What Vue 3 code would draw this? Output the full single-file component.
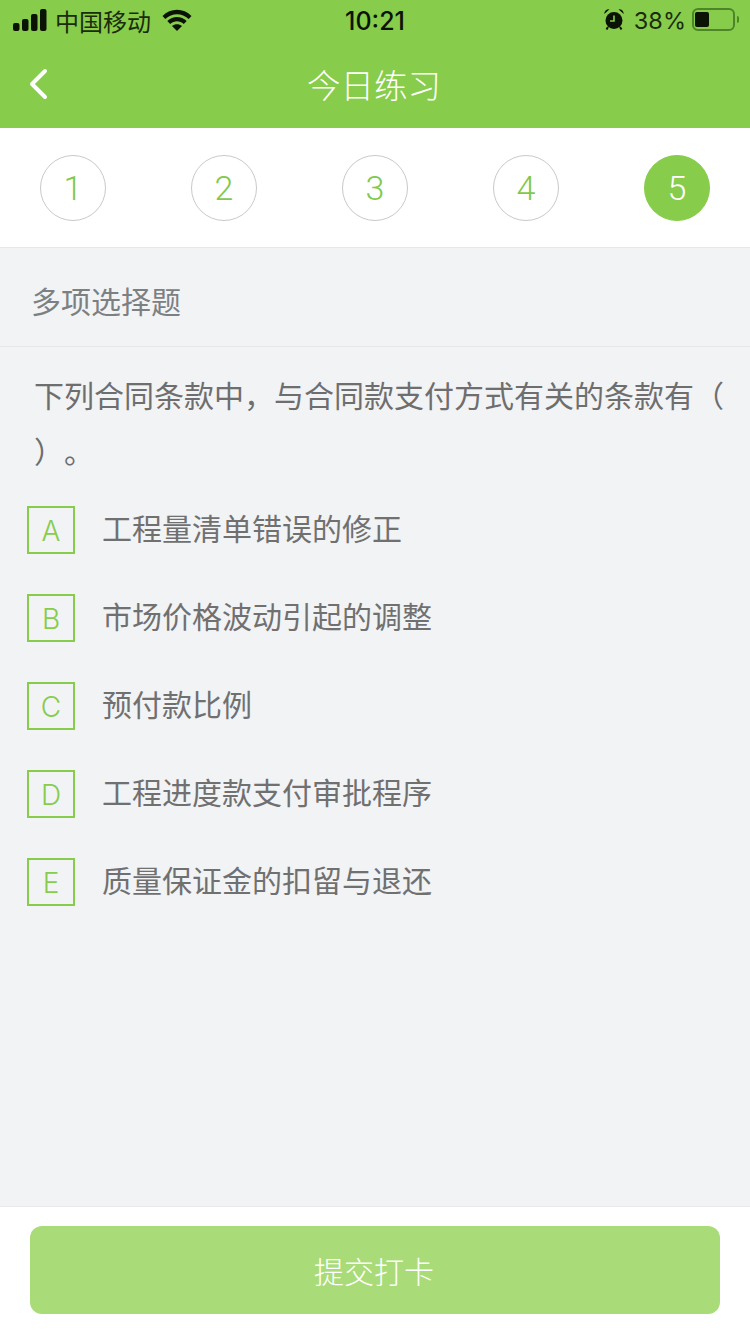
<script setup>
const steps = [1, 2, 3, 4, 5]
const options = [
  ['A', '工程量清单错误的修正'],
  ['B', '市场价格波动引起的调整'],
  ['C', '预付款比例'],
  ['D', '工程进度款支付审批程序'],
  ['E', '质量保证金的扣留与退还'],
]
</script>

<template>
  <div class="page">
    <header class="head">
      <div class="status">
        <div class="st-left">
          <svg class="signal" width="34" height="22" viewBox="0 0 34 22">
            <rect x="0" y="14" width="6.500" height="8" rx="2" />
            <rect x="9" y="10" width="6.500" height="12" rx="2" />
            <rect x="18" y="5" width="6.500" height="17" rx="2" />
            <rect x="27" y="0" width="6.500" height="22" rx="2" />
          </svg>
          <span class="carrier">中国移动</span>
          <svg class="wifi" width="30" height="22" viewBox="0 0 30 22">
            <path d="M0.500 7 C8.500 -1.500 21.500 -1.500 29.500 7 L26.700 10 C20 3.500 10 3.500 3.300 10 Z" />
            <path d="M5.300 12 C11 6.700 19 6.700 24.700 12 L21.800 15 C17.700 11.300 12.300 11.300 8.200 15 Z" />
            <path d="M10 17 C13 14.500 17 14.500 20 17 L15 22 Z" />
          </svg>
        </div>
        <div class="time">10:21</div>
        <div class="st-right">
          <svg class="alarm" width="20" height="21" viewBox="0 0 20 21">
            <circle cx="10" cy="11.500" r="8.500" />
            <path d="M0.300 5 C0.300 2 2.500 0 5.500 0.300 Z M19.700 5 C19.700 2 17.500 0 14.500 0.300 Z" />
            <path d="M4 18 L2.500 20.500 M16 18 L17.500 20.500" class="alarm-leg" />
            <path d="M10 6.500 V12 H6" class="alarm-hand" />
          </svg>
          <span class="pct">38%</span>
          <div class="batt"><i class="batt-fill"></i></div>
          <i class="batt-tip"></i>
        </div>
      </div>
      <div class="nav">
        <svg class="back" width="20" height="32" viewBox="0 0 20 32">
          <path d="M16 3 L3 16 L16 29" />
        </svg>
        <h1 class="title">今日练习</h1>
      </div>
    </header>

    <section class="steps">
      <div v-for="n in steps" :key="n" class="step" :class="{ on: n === 5 }">{{ n }}</div>
    </section>

    <div class="kind">多项选择题</div>

    <main class="body">
      <p class="question">下列合同条款中，与合同款支付方式有关的条款有（ ）。</p>
      <ul class="opts">
        <li v-for="o in options" :key="o[0]" class="opt">
          <span class="letter">{{ o[0] }}</span>
          <span class="opt-text">{{ o[1] }}</span>
        </li>
      </ul>
    </main>

    <footer class="foot">
      <button class="submit">提交打卡</button>
    </footer>
  </div>
</template>

<style>
html, body { margin: 0; padding: 0; }
</style>

<style scoped>
.page {
  width: 750px;
  height: 1334px;
  display: flex;
  flex-direction: column;
  background: #f2f3f5;
  font-family: "Noto Sans CJK SC", "Liberation Sans", sans-serif;
  overflow: hidden;
  text-spacing-trim: space-all;
}
.head { height: 128px; background: #87cc4b; flex: none; }
.status {
  height: 42px;
  display: flex;
  align-items: center;
  justify-content: space-between;
  position: relative;
  color: #0b1404;
}
.st-left { display: flex; align-items: center; padding-left: 13px; }
.signal { fill: #0b1404; margin-top: -3px; }
.carrier { font-size: 24px; margin-left: 8px; line-height: 42px; color: #1a2c0c; }
.wifi { fill: #0b1404; margin-left: 11px; margin-top: -3px; }
.time {
  position: absolute;
  left: 0;
  right: 0;
  text-align: center;
  font: 500 25px/42px "Inter", "Liberation Sans", sans-serif;
  color: #0b1404;
}
.st-right { display: flex; align-items: center; padding-right: 11px; }
.alarm { fill: #0b1404; margin-top: -4px; }
.alarm-leg { stroke: #0b1404; stroke-width: 2; fill: none; }
.alarm-hand { stroke: #87cc4b; stroke-width: 1.600; fill: none; }
.pct {
  font: 400 23.500px/42px "Inter", "Liberation Sans", sans-serif;
  margin-left: 10px;
  color: #1a2c0c;
}
.batt {
  margin-left: 6px;
  margin-top: -3px;
  border: 2px solid #4d8528;
  border-radius: 6px;
  padding: 2px 2px 2px 1px;
  box-sizing: content-box;
  height: 15px;
  width: 36px;
}
.batt-fill { display: block; width: 14px; height: 15px; background: #0b1404; border-radius: 2px; }
.batt-tip {
  display: block;
  width: 2px;
  height: 7px;
  margin-left: 2px;
  margin-top: -3px;
  background: #4d8528;
  border-radius: 0 2px 2px 0;
}
.nav {
  height: 86px;
  position: relative;
  display: flex;
  align-items: center;
  justify-content: center;
  padding-right: 2px;
}
.back {
  position: absolute;
  left: 29px;
  top: 26px;
  fill: none;
  stroke: #fff;
  stroke-width: 4;
  stroke-linecap: round;
  stroke-linejoin: round;
}
.title {
  margin: 0;
  font-size: 33.500px;
  font-weight: 300;
  color: #fff;
  line-height: 86px;
  margin-top: -2px;
}
.steps {
  flex: none;
  height: 119px;
  background: #fff;
  border-bottom: 1px solid #e6e7ea;
  display: flex;
  justify-content: space-between;
  align-items: center;
  padding: 0 40px;
  box-sizing: content-box;
}
.step {
  width: 66px;
  height: 66px;
  box-sizing: border-box;
  border: 1px solid #c9c9c9;
  border-radius: 50%;
  display: flex;
  align-items: center;
  justify-content: center;
  color: #7fc94c;
  font: 300 34px/1 "Roboto", "Liberation Sans", sans-serif;
}
.step.on { background: #87cc4b; color: #fff; border-color: #87cc4b; }
.kind {
  flex: none;
  height: 98px;
  padding-left: 31px;
  line-height: 104px;
  font-size: 30px;
  color: #7d8082;
  border-bottom: 1px solid #e6e7ea;
  box-sizing: content-box;
}
.body { flex: 1; padding: 19px 0 0 34px; }
.question {
  margin: 0;
  font-size: 30px;
  line-height: 56px;
  color: #6e6e6e;
  width: 700px;
}
.opts { list-style: none; margin: 28px 0 0 -7px; padding: 0; }
.opt { height: 88px; display: flex; align-items: flex-start; }
.letter {
  width: 48px;
  height: 48px;
  box-sizing: border-box;
  border: 2px solid #87cc4b;
  flex: none;
  display: flex;
  align-items: center;
  justify-content: center;
  color: #87cc4b;
  font: 300 28px/1 "Inter", "Liberation Sans", sans-serif;
  padding-top: 2px;
}
.opt-text {
  margin-left: 27px;
  margin-top: -1px;
  font-size: 30px;
  line-height: 44px;
  color: #707070;
}
.foot {
  flex: none;
  height: 128px;
  background: #fff;
  border-top: 1px solid #e8e9ec;
  padding: 19px 30px 0;
  box-sizing: border-box;
}
.submit {
  display: block;
  width: 690px;
  height: 88px;
  border: 0;
  border-radius: 12px;
  padding: 0 2px 0 0;
  background: #a9dc78;
  color: #fff;
  font-family: inherit;
  font-size: 30px;
  font-weight: 300;
}
</style>
